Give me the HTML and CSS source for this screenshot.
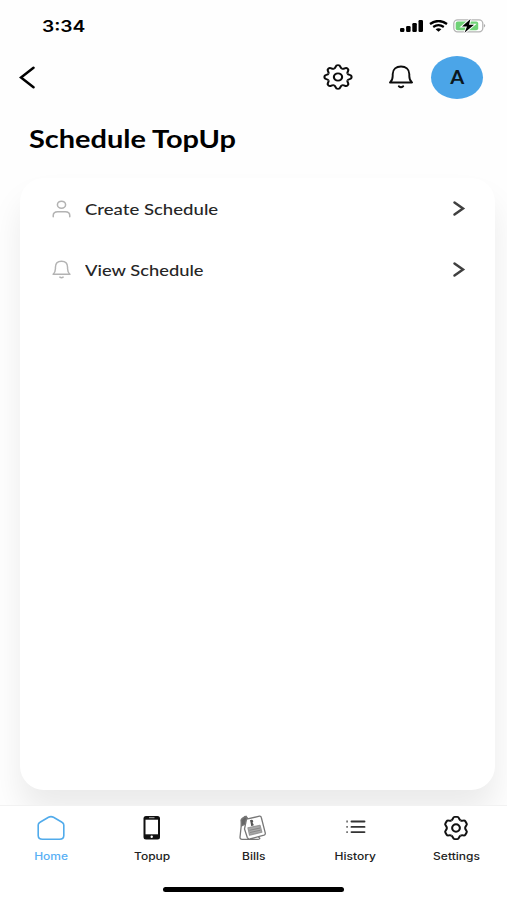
FILE: index.html
```html
<!DOCTYPE html>
<html lang="en">
<head>
<meta charset="utf-8">
<title>Schedule TopUp</title>
<link rel="stylesheet" href="styles.css">
</head>
<body>
<div class="status">
  <span class="time"><span class="wide">3:34</span></span>
  <svg class="signal" width="23" height="12" viewBox="0 0 23 12"><rect x="0" y="8" width="4.400" height="4" rx="1.200"/><rect x="6.100" y="6" width="4.500" height="6" rx="1.200"/><rect x="12.300" y="3" width="4.500" height="9" rx="1.200"/><rect x="18.500" y="0" width="4.500" height="12" rx="1.200"/></svg>
  <svg class="wifi" width="19" height="12" viewBox="0 0 19 12" fill="none" stroke="#000"><path d="M1 4Q9.5-2 18 4" stroke-width="2.3"/><path d="M4.2 7Q9.500 3.200 14.800 7" stroke-width="2.2"/><path d="M6.600 9.300Q9.500 7.300 12.400 9.300L9.500 11.800Z" fill="#000" stroke="none"/></svg>
  <svg class="battery" width="34" height="14" viewBox="0 0 34 14"><rect x=".8" y=".8" width="29" height="12" rx="3.800" fill="#fff" stroke="#b4b4b4" stroke-width="1.300"/><rect x="2.700" y="2.500" width="22.500" height="8.700" rx="2" fill="#6fd276"/><path d="M31 5q2.500 1.700 0 3.500z" fill="#aaa"/><path d="M17.500 0 9 7.600h5L11.500 13.800 21 5.700h-5z" stroke="#fff" stroke-width="2" paint-order="stroke"/></svg>
</div>
<header class="header">
  <svg class="back" width="17" height="23" viewBox="0 0 17 23"><path d="M14.500 1.800 2 11.500 14.500 21.200" fill="none" stroke="#000" stroke-width="2.500" stroke-linecap="round"/></svg>
  <svg class="gear" width="30" height="26" viewBox="-12 -12 24 24" preserveAspectRatio="none" fill="none" stroke="#0c0c0c" stroke-width="1.700">
    <defs><path id="tooth8" d="M-3.180-7.670C-1.100-8.530-2.700-10.900 0-10.900S1.100-8.530 3.180-7.670"/></defs>
    <use href="#tooth8"/><use href="#tooth8" transform="rotate(45)"/><use href="#tooth8" transform="rotate(90)"/><use href="#tooth8" transform="rotate(135)"/><use href="#tooth8" transform="rotate(180)"/><use href="#tooth8" transform="rotate(225)"/><use href="#tooth8" transform="rotate(270)"/><use href="#tooth8" transform="rotate(315)"/><circle r="3.300"/>
  </svg>
  <svg class="bell" width="26" height="24" viewBox="0 0 26 24" fill="none" stroke="#0c0c0c" stroke-width="1.900" stroke-linecap="round" stroke-linejoin="round"><path d="M2 17.500Q4.700 15.300 4.700 11V9C4.700 4 8.300 1.500 13 1.500S21.300 4 21.300 9v2Q21.300 15.300 24 17.500ZM10.800 21.300Q13 23.200 15.200 21.300"/></svg>
  <div class="avatar"><span class="wide">A</span></div>
</header>
<h1 class="title"><span class="wide">Schedule TopUp</span></h1>
<main class="card">
  <div class="row">
    <svg width="19" height="18" viewBox="0 0 20 18" preserveAspectRatio="none" fill="none" stroke="#b3b3b3" stroke-width="1.600" stroke-linecap="round"><ellipse cx="10" cy="4.700" rx="4.300" ry="3.500"/><path d="M1.300 16.800v-1.200Q1.300 11.800 6 11.800h8Q18.700 11.800 18.700 15.600v1.200"/></svg>
    <span class="label"><span class="wide">Create Schedule</span></span>
    <svg class="next" width="14" height="17" viewBox="0 0 14 17"><path d="M2.500 2.500 11 8.500 2.500 14.500" fill="none" stroke="#404040" stroke-width="2.500" stroke-linecap="round"/></svg>
  </div>
  <div class="row">
    <svg width="19" height="19" viewBox="0 0 26 24" preserveAspectRatio="none" fill="none" stroke="#b3b3b3" stroke-width="2" stroke-linecap="round" stroke-linejoin="round"><path d="M1.500 18Q4.700 15.300 4.700 11V9C4.700 4 8.300 1.500 13 1.500S21.300 4 21.300 9v2Q21.300 15.300 24.500 18ZM10.800 21.700Q13 23.300 15.200 21.700"/></svg>
    <span class="label view"><span class="wide">View Schedule</span></span>
    <svg class="next" width="14" height="17" viewBox="0 0 14 17"><path d="M2.500 2.500 11 8.500 2.500 14.500" fill="none" stroke="#404040" stroke-width="2.500" stroke-linecap="round"/></svg>
  </div>
</main>
<nav class="nav">
  <div class="tabs">
    <a class="tab active"><svg width="28" height="26" viewBox="0 0 28 26" fill="none" stroke="#51abeb" stroke-width="1.600"><path d="M3 7.300 11.500 2.300Q14 .9 16.500 2.300L25 7.300Q26.800 8.300 26.800 10V20.500Q26.800 24.200 22.500 24.200H5.500Q1.200 24.200 1.200 20.500V10Q1.200 8.300 3 7.300Z"/></svg><span class="wide">Home</span></a>
    <a class="tab"><svg width="28" height="26" viewBox="0 0 28 26"><rect x="5.500" y="1" width="16.500" height="23.500" rx="2.500" fill="#111"/><path d="M7.500 4.700h12.500v14.600H7.500z" fill="#fff"/><path d="M11 2.700h5.500" stroke="#aaa"/><circle cx="13.700" cy="21.800" r="1.200" fill="#fff"/></svg><span class="wide">Topup</span></a>
    <a class="tab"><svg width="28" height="26" viewBox="0 0 28 26" fill="#fff" stroke="#777" stroke-width="1.300" stroke-linejoin="round"><path d="M3 3.500 7 1.200 20 22.500q2 1.500-1 1.800H3q-2 0-2-2z"/><path d="M2 5 6 1.500 8 3 6.500 9 2.500 11z" fill="#666"/><path d="M7.500 4.200 20.500 1.200Q22 1 22.300 2.500L26.300 18.200Q26.500 19.700 25 20.200L11 24Q9 24.300 8.300 22.500L5.500 14Z"/><path d="m9 12.800 12-2.400 1.800 6.800-12.200 2.800z" fill="#aaa" stroke="#999"/><path d="m10.500 15.300 10.500-2.300M11 17.500l10.500-2.300" stroke="#777" stroke-width=".7"/><path d="M11.300 6q1.500-1.500 2.300.2l-.8 1.700 1.300 2-2 .6" fill="#555" stroke="#555"/></svg><span class="wide">Bills</span></a>
    <a class="tab"><svg class="list" width="28" height="26" viewBox="0 0 28 26" stroke="#333" stroke-width="1.900"><path d="M10.500 6.500H23.500M10.500 11.900H23.500M10.500 17.100H23.500" stroke-linecap="round"/><path d="M5.200 6.500H7M5.200 11.900H7M5.200 17.100H7" stroke="#777"/></svg><span class="wide">History</span></a>
    <a class="tab"><svg width="28" height="26" viewBox="-13 -12.500 26 25" preserveAspectRatio="none" fill="none" stroke="#111" stroke-width="1.900">
      <defs><path id="tooth6" d="M-4.250-7.360C-2.300-8.500-3.200-10.700-1.200-10.700H1.200C3.200-10.700 2.300-8.500 4.250-7.360"/></defs>
      <use href="#tooth6"/><use href="#tooth6" transform="rotate(60)"/><use href="#tooth6" transform="rotate(120)"/><use href="#tooth6" transform="rotate(180)"/><use href="#tooth6" transform="rotate(240)"/><use href="#tooth6" transform="rotate(300)"/><circle r="3.600"/></svg><span class="wide">Settings</span></a>
  </div>
  <div class="indicator"></div>
</nav>
</body>
</html>
```
FILE: styles.css
```css
* { box-sizing: border-box; }
body {
  margin: 0;
  height: 900px;
  overflow: hidden;
  display: flex;
  flex-direction: column;
  background: #fefefe;
  font-family: Lato, sans-serif;
  color: #000;
}
svg { display: block; flex: none; }
.wide { display: inline-block; transform: scaleX(1.2); white-space: nowrap; }
.status { height: 52px; padding: 0 20px 0 42px; display: flex; align-items: center; }
.time { flex: 1; font: 600 16px/20px Inter, sans-serif; }
.time .wide { transform-origin: left; }
.wifi { margin-left: 6px; }
.battery { margin-left: 5px; }
.header { height: 50px; padding: 0 24px 0 19px; display: flex; align-items: center; }
.gear { margin-left: auto; }
.bell { margin-left: 35px; }
.avatar {
  width: 52px; height: 43px; margin-left: 17px;
  border-radius: 50%; background: #4ba5e8;
  display: flex; align-items: center; justify-content: center;
  font-size: 18px; font-weight: 700; color: #0b1720;
}
.avatar .wide { transform: scaleX(1.12); }
.title { margin: 17px 0 0 29px; font-size: 25.500px; line-height: 38px; font-weight: 700; }
.title .wide { transform: scaleX(1.135); transform-origin: left; }
.card {
  margin: 21px 12px 15px 20px;
  height: 612px;
  padding: 0 29px 0 32px;
  border-radius: 24px;
  background: #fff;
  box-shadow: 0 22px 32px rgba(0, 0, 0, .08);
}
.row { height: 61px; display: flex; align-items: center; }
.label { flex: 1; margin-left: 14px; font-size: 16px; font-weight: 500; color: #262626; }
.label .wide { transform: scaleX(1.16); transform-origin: left; }
.view .wide { transform: scaleX(1.145); }
.nav { position: relative; height: 95px; border-top: 1px solid #f2f2f2; background: #fff; }
.tabs { display: grid; grid-template-columns: repeat(5, 1fr); height: 81px; }
.tab {
  display: flex; flex-direction: column; align-items: center;
  padding: 9px 0 0; gap: 8px;
  font: 500 10px/14px Inter, sans-serif; color: #222;
}
.active { color: #59b0f5; }
.indicator { width: 181px; height: 5px; margin: 0 auto; border-radius: 3px; background: #000; }
```
